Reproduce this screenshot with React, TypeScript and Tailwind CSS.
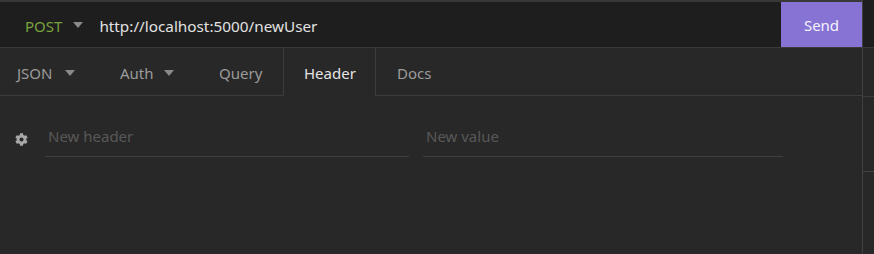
import { FaCog } from 'react-icons/fa'

const font = { fontFamily: '"Noto Sans", "Open Sans", sans-serif' }

function Caret() {
  return (
    <svg width="10" height="6" viewBox="0 0 10 6" className="shrink-0" aria-hidden="true">
      <polygon points="0,0 10,0 5,6" fill="#8a8a8a" />
    </svg>
  )
}

export default function App() {
  return (
    <div className="flex h-[254px] w-[874px] bg-[#282828] text-[15px]" style={font}>
      <div className="flex w-[862px] flex-col">
        <div className="h-[2px] bg-[#383838]" />
        <div className="flex h-[46px] items-stretch border-b border-[#3a3a3a] bg-[#1e1e1e]">
          <div className="flex items-center gap-[11px] pl-[25px] pr-[15px] pt-[3px]">
            <span className="text-[#78a23c]">POST</span>
            <span className="-mt-[3px]">
              <Caret />
            </span>
          </div>
          <div className="flex flex-1 items-center pl-[1px] pt-[3px] text-[15.3px] text-[#e2e2e2]">
            http://localhost:5000/newUser
          </div>
          <button className="w-[81px] bg-[#8673d4] pt-[2px] text-[#f4f2fc]">Send</button>
        </div>
        <div className="flex h-[48px] items-stretch bg-[#282828]">
          <div className="flex w-[99px] items-center gap-[13px] border-b border-[#3c3c3c] pl-[17px] pt-[3px] text-[#9b9b9b]">
            JSON <Caret />
          </div>
          <div className="flex w-[99px] items-center gap-[10px] border-b border-[#3c3c3c] pl-[21px] pt-[3px] text-[#9b9b9b]">
            Auth <Caret />
          </div>
          <div className="flex w-[85px] items-center border-b border-[#3c3c3c] pl-[21px] pt-[3px] text-[#9b9b9b]">
            Query
          </div>
          <div className="flex w-[93px] items-center border-x border-[#3c3c3c] pl-[20px] pt-[3px] text-[#e4e4e4]">
            Header
          </div>
          <div className="flex flex-1 items-center border-b border-[#3c3c3c] pl-[21px] pt-[3px] text-[#9b9b9b]">
            Docs
          </div>
        </div>
        <div className="flex items-start pt-[29px]">
          <div className="flex w-[45px] justify-center pl-[1px] pt-[8px] pr-[3px] text-[#a8a8a8]">
            <FaCog size={13} />
          </div>
          <div className="w-[364px] border-b border-[#404040] pb-[8px] pl-[3px] text-[#585858]">
            New header
          </div>
          <div className="ml-[14px] w-[360px] border-b border-[#404040] pb-[8px] pl-[3px] text-[#585858]">
            New value
          </div>
        </div>
      </div>
      <div className="flex flex-1 flex-col border-l border-[#404040]">
        <div className="h-[48px] border-b border-[#3a3a3a] bg-[#1e1e1e]" />
        <div className="h-[49px] border-b border-[#3c3c3c]" />
        <div className="h-[75px] border-b border-[#444]" />
      </div>
    </div>
  )
}
